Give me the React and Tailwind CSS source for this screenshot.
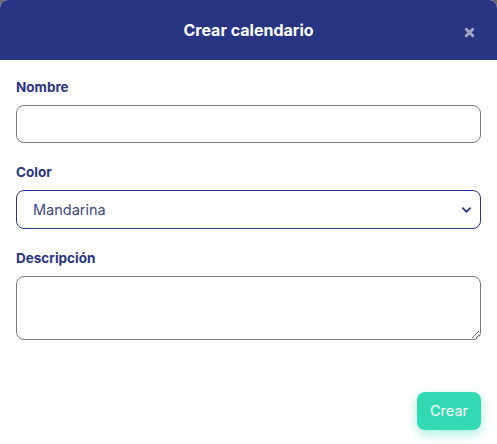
import React from 'react';

const labelCls = 'block text-[13.5px] leading-[20px] font-bold text-[#283583] mb-[8px]';

const App = () => {
  return (
    <div className="min-h-screen bg-[#6b6b6b]" style={{ fontFamily: 'Inter, "Open Sans", sans-serif' }}>
      <div className="w-[497px] h-[444px] bg-white rounded-t-lg overflow-hidden flex flex-col">
        <header className="relative h-[60px] bg-[#283583] flex items-center justify-center shrink-0">
          <h1 className="text-white text-[16px] font-bold">Crear calendario</h1>
          <button className="absolute right-[22px] top-[26px] w-[12px] h-[12px] flex items-center justify-center">
            <svg viewBox="0 0 12 12" className="w-[11px] h-[11px]">
              <path d="M2.5 2.5 L9.5 9.5 M9.5 2.5 L2.5 9.5" stroke="#a4a8c8" strokeWidth="3.2" strokeLinecap="round" />
            </svg>
          </button>
        </header>

        <div className="flex-1 px-4 pt-[17px] flex flex-col">
          <div className="mb-[19px]">
            <label className={labelCls}>Nombre</label>
            <input
              type="text"
              className="block w-full h-[38px] rounded-lg border border-[#7a7a7a] bg-white px-4 text-sm text-[#3d4a80] outline-none"
            />
          </div>

          <div className="mb-[19px]">
            <label className={labelCls}>Color</label>
            <div className="relative">
              <select
                defaultValue="mandarina"
                className="block w-full h-[39px] appearance-none rounded-lg border border-[#283583] bg-white pl-4 pr-10 text-[14.5px] text-[#3d4a80] outline-none"
              >
                <option value="mandarina">Mandarina</option>
                <option value="tomate">Tomate</option>
                <option value="salvia">Salvia</option>
              </select>
              <svg viewBox="0 0 10 6" className="pointer-events-none absolute right-[10px] top-[17px] w-[9px] h-[6px]">
                <path d="M1 1 L5 5 L9 1" fill="none" stroke="#283583" strokeWidth="2" strokeLinecap="round" strokeLinejoin="round" />
              </svg>
            </div>
          </div>

          <div>
            <label className={labelCls}>Descripción</label>
            <textarea
              className="block w-full h-[64px] rounded-lg border border-[#7a7a7a] bg-white px-4 py-2 text-sm text-[#3d4a80] outline-none"
            />
          </div>

          <div className="mt-auto mb-[14px] flex justify-end">
            <button className="h-[38px] w-[64px] rounded-lg bg-[#33d9b2] text-white text-[14.5px] shadow-[0_4px_12px_rgba(51,217,178,0.45)]">
              Crear
            </button>
          </div>
        </div>
      </div>
    </div>
  );
};

export default App;
